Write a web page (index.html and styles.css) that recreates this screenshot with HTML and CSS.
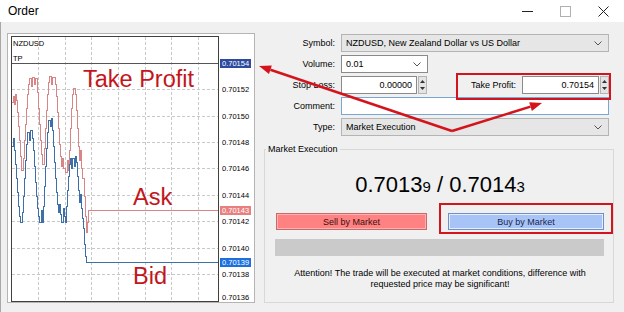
FILE: index.html
```html
<!DOCTYPE html>
<html lang="en">
<head>
    <meta charset="UTF-8">
    <title>Order</title>
    <link rel="stylesheet" href="styles.css">
</head>
<body>
    <div class="titlebar">
        <span class="title">Order</span>
        <span class="winbtn"><svg width="11" height="11" viewBox="0 0 11 11"><path d="M0 5.5h11" stroke="#222"/></svg></span>
        <span class="winbtn"><svg width="11" height="11" viewBox="0 0 11 11"><rect x="0.5" y="0.5" width="10" height="10" fill="none" stroke="#b0b0b0"/></svg></span>
        <span class="winbtn"><svg width="11" height="11" viewBox="0 0 11 11"><path d="M0.5 0.5l10 10M10.5 0.5l-10 10" stroke="#222"/></svg></span>
    </div>

    <div class="main">
        <!-- chart: page coordinates are used directly through the viewBox -->
        <svg class="chart" width="248" height="270" viewBox="7 33 248 270">
            <rect x="7.5" y="33.5" width="247" height="269" fill="#fff" stroke="#b4b4b4"/>
            <g stroke="#c8c8c8" stroke-dasharray="3 2">
                <path d="M38.5 37v264M65.5 37v264M91.5 37v264M118.5 37v264M145.5 37v264M171.5 37v264M198.5 37v264"/>
                <path d="M12 89.5h206M12 116.5h206M12 142.5h206M12 168.5h206M12 195.5h206M12 221.5h206M12 248.5h206M12 274.5h206"/>
            </g>
            <path d="M12 63.5h206" stroke="#555"/>
            <g class="trace" fill="none" stroke-width="1" shape-rendering="crispEdges">
                <!-- ask -->
                <polyline stroke="#d98585"
                    points="12,102 13,102 13,96 14,96 14,104 15,104 15,94 16,94 16,100 17,100 17,112 18,112 18,126 19,126 19,140 20,140 20,156 21,156 21,170 23,170 23,158 24,158 24,140 25,140 25,124 26,124 26,108 27,108 27,94 28,94 28,84 29,84 29,78 31,78 31,86 32,86 32,77 34,77 34,84 35,84 35,78 37,78 37,92 38,92 38,108 39,108 39,124 40,124 40,140 41,140 41,154 42,154 42,164 44,164 44,148 45,148 45,128 46,128 46,110 47,110 47,94 48,94 48,82 49,82 49,76 51,76 51,84 52,84 52,77 55,77 55,84 56,84 56,96 57,96 57,112 58,112 58,128 59,128 59,144 60,144 60,156 61,156 61,166 62,166 62,158 63,158 63,168 65,168 65,172 67,172 67,160 68,160 68,170 69,170 69,150 70,150 70,128 71,128 71,108 72,108 72,94 73,94 73,88 75,88 75,94 76,94 76,110 77,110 77,128 78,128 78,146 79,146 79,160 80,160 80,150 81,150 81,168 82,168 82,178 84,178 84,196 85,196 85,216 86,216 86,232 87,232 87,222 88,222 88,210 218,210"/>
                <!-- bid -->
                <polyline stroke="#3d6fa8"
                    points="12,146 13,146 13,138 14,138 14,150 15,150 15,164 16,164 16,178 17,178 17,192 18,192 18,206 19,206 19,216 20,216 20,222 22,222 22,212 23,212 23,196 24,196 24,178 25,178 25,160 26,160 26,144 27,144 27,132 29,132 29,140 30,140 30,130 32,130 32,138 33,138 33,150 34,150 34,166 35,166 35,182 36,182 36,196 37,196 37,208 38,208 38,216 39,216 39,222 41,222 41,210 42,210 42,222 43,222 43,206 44,206 44,186 45,186 45,166 46,166 46,148 47,148 47,132 48,132 48,120 50,120 50,126 51,126 51,118 52,118 52,130 53,130 53,146 54,146 54,162 55,162 55,178 56,178 56,192 57,192 57,204 58,204 58,212 59,212 59,204 60,204 60,214 61,214 61,222 63,222 63,208 64,208 64,216 65,216 65,222 66,222 66,206 67,206 67,190 68,190 68,176 69,176 69,164 70,164 70,158 71,158 71,168 72,168 72,158 74,158 74,166 75,166 75,156 76,156 76,162 77,162 77,176 78,176 78,190 79,190 79,202 80,202 80,194 81,194 81,208 82,208 82,218 83,218 83,228 84,228 84,244 85,244 85,256 86,256 86,262 218,262"/>
            </g>
            <rect x="11.5" y="36.5" width="207" height="265" fill="none" stroke="#404040"/>

            <g class="axis">
                <text x="13" y="46">NZDUSD</text>
                <text x="13" y="61">TP</text>
                <rect x="220" y="59" width="31" height="9" fill="#2d4aa0"/>
                <text x="222" y="66" fill="#fff">0.70154</text>
                <text x="222" y="92">0.70152</text>
                <text x="222" y="119">0.70150</text>
                <text x="222" y="145">0.70148</text>
                <text x="222" y="171">0.70146</text>
                <text x="222" y="198">0.70144</text>
                <rect x="220" y="206" width="31" height="9" fill="#e98080"/>
                <text x="222" y="213" fill="#fff">0.70143</text>
                <text x="222" y="224">0.70142</text>
                <text x="222" y="251">0.70140</text>
                <rect x="220" y="258" width="31" height="9" fill="#1c6fdc"/>
                <text x="222" y="265" fill="#fff">0.70139</text>
                <text x="222" y="277">0.70138</text>
                <text x="222" y="300">0.70136</text>
            </g>
            <g class="note-big">
                <text x="83" y="87">Take Profit</text>
                <text x="133" y="205">Ask</text>
                <text x="133" y="284">Bid</text>
            </g>
        </svg>

        <div class="side">
            <div class="form">
                <label>Symbol:</label>
                <div class="combo combo-ro">
                    <span>NZDUSD, New Zealand Dollar vs US Dollar</span>
                    <svg class="chev" width="8" height="5" viewBox="0 0 8 5"><path d="M0.5 0.5l3.5 3.5 3.5-3.5" fill="none" stroke="#555"/></svg>
                </div>

                <label>Volume:</label>
                <div class="field-row">
                    <div class="combo combo-vol">
                        <span>0.01</span>
                        <svg class="chev" width="8" height="5" viewBox="0 0 8 5"><path d="M0.5 0.5l3.5 3.5 3.5-3.5" fill="none" stroke="#555"/></svg>
                    </div>
                </div>

                <label>Stop Loss:</label>
                <div class="field-row">
                    <div class="spin spin-sl">
                        <span class="spin-val">0.00000</span>
                        <span class="spin-btns">
                            <svg width="5" height="3" viewBox="0 0 5 3"><path d="M0 3L2.5 0 5 3z" fill="#333"/></svg>
                            <svg width="5" height="3" viewBox="0 0 5 3"><path d="M0 0L2.5 3 5 0z" fill="#333"/></svg>
                        </span>
                    </div>
                    <label class="tp-label">Take Profit:</label>
                    <div class="spin spin-tp">
                        <span class="spin-val">0.70154</span>
                        <span class="spin-btns">
                            <svg width="5" height="3" viewBox="0 0 5 3"><path d="M0 3L2.5 0 5 3z" fill="#333"/></svg>
                            <svg width="5" height="3" viewBox="0 0 5 3"><path d="M0 0L2.5 3 5 0z" fill="#333"/></svg>
                        </span>
                    </div>
                </div>

                <label>Comment:</label>
                <div class="edit edit-focus"></div>

                <label>Type:</label>
                <div class="combo combo-ro">
                    <span>Market Execution</span>
                    <svg class="chev" width="8" height="5" viewBox="0 0 8 5"><path d="M0.5 0.5l3.5 3.5 3.5-3.5" fill="none" stroke="#555"/></svg>
                </div>
            </div>

            <div class="group">
                <div class="group-title">Market Execution</div>
                <div class="quote">0.7013<small>9</small> / 0.7014<small>3</small></div>
                <div class="buttons">
                    <button class="btn btn-sell">Sell by Market</button>
                    <button class="btn btn-buy">Buy by Market</button>
                </div>
                <div class="bar"></div>
                <p class="note">Attention! The trade will be executed at market conditions, difference with<br>requested price may be significant!</p>
            </div>
        </div>
    </div>

    <!-- red annotation marks drawn over the dialog -->
    <svg class="marks" width="624" height="312" viewBox="0 0 624 312">
        <g fill="none" stroke="#d4141c" stroke-width="2">
            <rect x="457" y="74" width="153" height="25"/>
            <rect x="440" y="204" width="172" height="29"/>
        </g>
        <path d="M452 131L270.4 69.8M452 131L530.5 106.6" stroke="#d4141c" stroke-width="2.5" fill="none"/>
        <path d="M259 66L271.8 65.5 269 74.1z" fill="#d4141c"/>
        <path d="M542 103L531.9 110.9 529.2 102.3z" fill="#d4141c"/>
    </svg>
</body>
</html>
```

FILE: styles.css
```css
body {
    margin: 0;
    width: 624px;
    height: 312px;
    overflow: hidden;
    position: relative;
    background: #f0f0f0;
    font-family: "Liberation Sans", Arial, sans-serif;
    font-size: 9px;
    color: #000;
}
.titlebar {
    height: 22px;
    background: #fff;
    display: flex;
    align-items: center;
    padding-left: 8px;
}
.title {
    flex: 1;
    font-size: 12px;
}
.winbtn {
    width: 38px;
    height: 22px;
    display: flex;
    align-items: center;
    justify-content: center;
}
.winbtn:last-child {
    margin-right: 2px;
}
.main {
    display: flex;
    padding: 11px 0 0 6px;
    height: 279px;
    border-left: 1px solid #a8a8a8;
}
.chart {
    display: block;
    flex: none;
}
.axis text {
    font-size: 7.5px;
}
.note-big text {
    font-size: 23.5px;
    fill: #c3161c;
}
.side {
    margin-left: 9px;
    width: 350px;
    padding-top: 1px;
}
.form {
    display: grid;
    grid-template-columns: 71px 1fr;
    column-gap: 6px;
    row-gap: 3px;
    padding-right: 5px;
}
.form label {
    text-align: right;
    line-height: 18px;
}
.field-row {
    display: flex;
    height: 18px;
}
.combo {
    height: 18px;
    box-sizing: border-box;
    display: flex;
    align-items: center;
    justify-content: space-between;
    padding: 0 6px 0 4px;
}
.combo-ro {
    background: #e6e6e6;
    border: 1px solid #b4b4b4;
}
.combo-vol {
    width: 87px;
    background: #fff;
    border: 1px solid #8a8a8a;
}
.spin {
    display: flex;
    height: 18px;
}
.spin-sl {
    width: 86px;
}
.spin-tp {
    width: 87px;
}
.spin-val {
    flex: 1;
    background: #fff;
    border: 1px solid #8a8a8a;
    text-align: right;
    padding-right: 4px;
    line-height: 16px;
}
.spin-btns {
    width: 9px;
    margin-left: 1px;
    box-sizing: border-box;
    background: #e4e4e4;
    border: 1px solid #b4b4b4;
    display: flex;
    flex-direction: column;
    align-items: center;
    justify-content: space-evenly;
}
.spin-btns svg {
    display: block;
}
.form .tp-label {
    flex: 1;
    padding-right: 6px;
}
.edit {
    height: 18px;
    box-sizing: border-box;
    background: #fff;
    border: 1px solid #8a8a8a;
}
.edit-focus {
    border-color: #7aa7d2;
}
.group {
    margin-top: 13px;
    height: 154px;
    box-sizing: border-box;
    border: 1px solid #d8d8d8;
    padding: 0 9px 0 11px;
}
.group-title {
    display: table;
    margin: -7px 0 0 -10px;
    padding: 0 2px;
    line-height: 13px;
    background: #f0f0f0;
}
.quote {
    margin-top: 16px;
    text-align: center;
    font-size: 22px;
    line-height: 26px;
}
.quote small {
    font-size: 15px;
}
.buttons {
    display: grid;
    grid-template-columns: 151px 1fr;
    column-gap: 21px;
    margin-top: 13px;
}
.btn {
    height: 17px;
    padding: 0;
    font-family: inherit;
    font-size: 9px;
}
.btn-sell {
    background: #ff8282;
    border: 1px solid #c96a6a;
    box-shadow: inset 0 0 0 1px #ffb0b0;
    color: #3a0d0d;
}
.btn-buy {
    background: #a8c4f6;
    border: 1px solid #6f8fc6;
    box-shadow: inset 0 0 0 1px #e4eeff;
    color: #17264e;
}
.bar {
    margin: 9px 0 0 -1px;
    height: 17px;
    background: #cacaca;
}
.note {
    margin: 12px 0 0;
    text-align: center;
    line-height: 11px;
}
.marks {
    position: absolute;
    top: 0;
    left: 0;
    pointer-events: none;
}
```
